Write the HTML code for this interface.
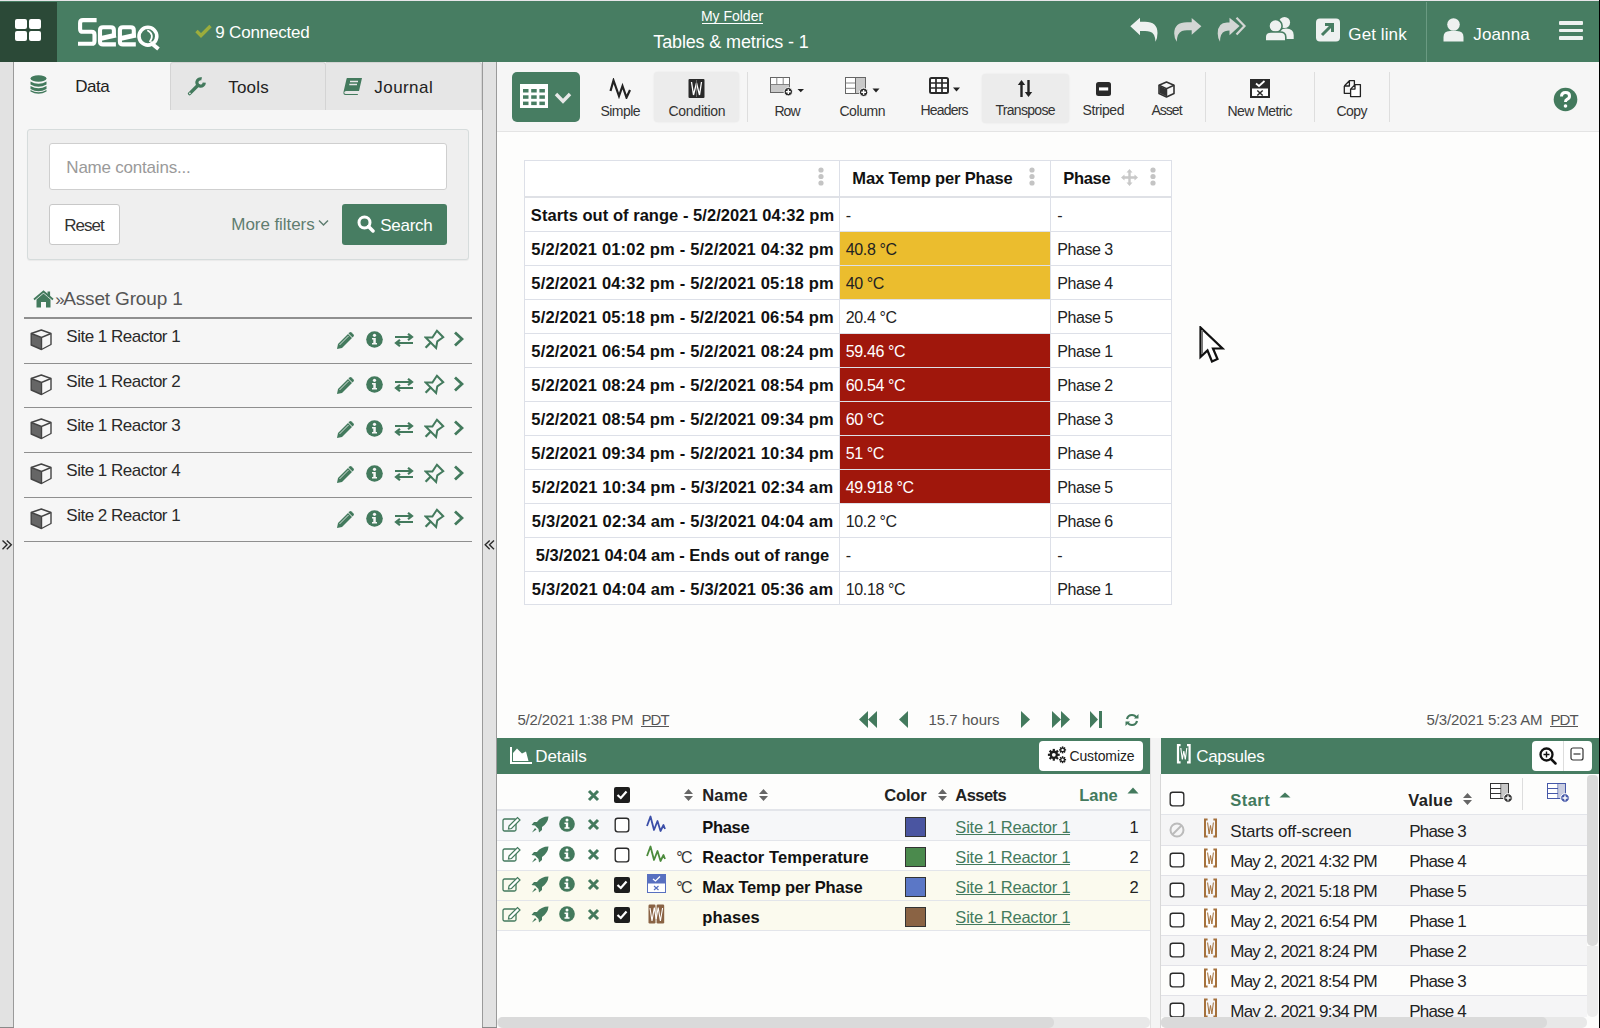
<!DOCTYPE html>
<html><head><meta charset="utf-8"><title>Seeq</title>
<style>
html,body{margin:0;padding:0;width:1600px;height:1028px;overflow:hidden;background:#fdfdfc;}
body{position:relative;font-family:"Liberation Sans",sans-serif;}
body>div,body>span,body>svg{position:absolute;}
span{white-space:pre;line-height:1;}
</style></head><body>
<div style="left:0px;top:0px;width:1600px;height:1px;background:#e8e6ea"></div>
<div style="left:0px;top:1px;width:1600px;height:61px;background:#477d62"></div>
<div style="left:0px;top:2px;width:57px;height:60px;background:#2b4937"></div>
<div style="left:15px;top:19px;width:12px;height:10px;background:#fff;border-radius:2px"></div>
<div style="left:29px;top:19px;width:12px;height:10px;background:#fff;border-radius:2px"></div>
<div style="left:15px;top:31px;width:12px;height:10px;background:#fff;border-radius:2px"></div>
<div style="left:29px;top:31px;width:12px;height:10px;background:#fff;border-radius:2px"></div>
<svg style="left:76px;top:16px" width="88" height="36" viewBox="0 0 88 36">
<g fill="none" stroke="#fff" stroke-width="4.1">
<path d="M20.6 4.1 H7 Q4.1 4.1 4.1 7 V12.9 Q4.1 15.8 7 15.8 H15.6 Q18.5 15.8 18.5 18.7 V24.9 Q18.5 27.8 15.6 27.8 H2"/>
<path d="M37.9 20 V14.3 Q37.9 11.3 34.9 11.3 H27 Q24 11.3 24 14.3 V25.4 Q24 28.4 27 28.4 H39.9"/>
<path d="M24 22.6 L39.9 19.1" stroke-width="4.7"/>
<path d="M57.8 20 V14.3 Q57.8 11.3 54.8 11.3 H46.9 Q43.9 11.3 43.9 14.3 V25.4 Q43.9 28.4 46.9 28.4 H59.8"/>
<path d="M43.9 22.6 L59.8 19.1" stroke-width="4.7"/>
<circle cx="71.9" cy="20.2" r="8.9" stroke-width="3.6"/>
<path d="M74.5 26.5 L82.5 33" stroke-width="4"/>
</g>
<path d="M71.3 14.3 Q79.2 18.5 73.6 26" fill="none" stroke="#fff" stroke-width="1.7"/>
</svg>
<svg style="left:195px;top:24px" width="17" height="14" viewBox="0 0 17 14"><path d="M1.5 7 L6 11.5 L15.5 2" fill="none" stroke="#9cad3c" stroke-width="3.4"/></svg>
<span style="left:215.32px;top:23.55px;font-size:17px;font-weight:400;color:#fff;letter-spacing:-0.205px;">9 Connected</span>
<span style="left:700.94px;top:9.10px;font-size:14px;font-weight:400;color:#fff;letter-spacing:-0.014px;">My Folder</span>
<div style="left:702px;top:22.5px;width:61px;height:1px;background:#fff"></div>
<span style="left:653.28px;top:32.70px;font-size:18px;font-weight:400;color:#fff;letter-spacing:-0.137px;">Tables &amp; metrics - 1</span>
<svg style="left:1129px;top:16px" width="30" height="28" viewBox="0 0 30 28"><path d="M1.3 10.2 L11 1.7 V5.8 H16 Q28.5 5.8 28.5 17 Q28.5 22 26.5 25.7 Q26 17 21 15.8 Q19 15.1 16 15.1 H11 V19.2 Z" fill="#eef1f0"/></svg>
<svg style="left:1172px;top:16px" width="31" height="28" viewBox="0 0 31 28"><path d="M29.4 10.2 L19.7 2.1 V6.2 H15 Q2.2 6.2 2.2 17.5 Q2.2 22 4.8 25.7 Q5 17 10 15 Q12 14.3 15 14.3 H19.7 V18.8 Z" fill="#d3d6d4"/></svg>
<svg style="left:1216px;top:16px" width="31" height="28" viewBox="0 0 31 28"><path d="M23.6 10 L13.5 1.7 V6.5 H11 Q1.7 6.5 1.7 17.5 Q1.7 22 4 25.7 Q4 17 9 15.2 Q11 14.5 13.5 14.5 V19.2 Z" fill="#d3d6d4"/><path d="M20.5 1.7 L28.5 10 L20.5 18.5" fill="none" stroke="#d3d6d4" stroke-width="2.2"/></svg>
<svg style="left:1264px;top:15px" width="31" height="27" viewBox="0 0 31 27"><g fill="#eef1f0"><circle cx="20.5" cy="7.5" r="5.6"/><path d="M15 24 V19.5 Q15 13.5 22 13.5 Q29.7 13.5 29.7 20 V24 Z"/>
<circle cx="11.5" cy="11" r="6.6" stroke="#477d62" stroke-width="1.6"/><path d="M1.2 26 V22 Q1.2 17 7 17 H16 Q21.8 17 21.8 22 V26 Z" stroke="#477d62" stroke-width="1.6"/></g></svg>
<svg style="left:1315px;top:18px" width="26" height="24" viewBox="0 0 26 24"><rect x="1" y="0.5" width="24" height="23" rx="4" fill="#eef1f0"/><path d="M7 17 L17 7 M10 6.5 H17.5 V14" stroke="#477d62" stroke-width="3" fill="none"/></svg>
<span style="left:1348.32px;top:25.55px;font-size:17px;font-weight:400;color:#fff;letter-spacing:0.103px;">Get link</span>
<div style="left:1426px;top:2px;width:1px;height:60px;background:#6a9a82"></div>
<svg style="left:1443px;top:18px" width="21" height="24" viewBox="0 0 21 24"><circle cx="10.5" cy="6.5" r="6.3" fill="#eef1f0"/><path d="M0.5 23.5 V19 Q0.5 13 7 13 H14 Q20.5 13 20.5 19 V23.5 Z" fill="#eef1f0"/></svg>
<span style="left:1473.32px;top:25.55px;font-size:17px;font-weight:400;color:#fff;letter-spacing:0.116px;">Joanna</span>
<div style="left:1559px;top:21px;width:24px;height:3.8px;background:#eef1f0;border-radius:1px"></div>
<div style="left:1559px;top:28.5px;width:24px;height:3.8px;background:#eef1f0;border-radius:1px"></div>
<div style="left:1559px;top:36px;width:24px;height:3.8px;background:#eef1f0;border-radius:1px"></div>
<div style="left:0px;top:62px;width:13px;height:966px;background:#e2e2e2"></div>
<div style="left:13px;top:62px;width:1px;height:966px;background:#9a9a9a"></div>
<div style="left:14px;top:62px;width:468px;height:966px;background:#f6f6f6"></div>
<div style="left:482px;top:62px;width:1px;height:966px;background:#9a9a9a"></div>
<div style="left:483px;top:62px;width:13px;height:966px;background:#e2e2e2"></div>
<div style="left:496px;top:62px;width:1px;height:966px;background:#9a9a9a"></div>
<svg style="left:1px;top:539px" width="12" height="12" viewBox="0 0 12 12"><path d="M1.5 1.5 L6 5.8 L1.5 10.2 M5.8 1.5 L10.3 5.8 L5.8 10.2" fill="none" stroke="#2a2a2a" stroke-width="1.4"/></svg>
<svg style="left:483px;top:539px" width="13" height="12" viewBox="0 0 13 12"><path d="M11 1.5 L6.5 5.8 L11 10.2 M6.7 1.5 L2.2 5.8 L6.7 10.2" fill="none" stroke="#2a2a2a" stroke-width="1.4"/></svg>
<div style="left:170px;top:62px;width:156px;height:48px;background:#e6e6e6;border:1px solid #d4d4d4;border-bottom:none;border-radius:3px 3px 0 0;box-sizing:border-box"></div>
<div style="left:326px;top:62px;width:156px;height:48px;background:#e6e6e6;border:1px solid #d4d4d4;border-left:none;border-bottom:none;border-radius:0 3px 0 0;box-sizing:border-box"></div>
<svg style="left:30px;top:74.5px" width="17" height="20" viewBox="0 0 17 20"><g fill="#437a5d"><ellipse cx="8.5" cy="3.5" rx="8" ry="3.2"/><path d="M0.5 6.5 Q8.5 11 16.5 6.5 V9.5 Q8.5 14 0.5 9.5Z"/><path d="M0.5 11 Q8.5 15.5 16.5 11 V14 Q8.5 18.5 0.5 14Z"/><path d="M0.5 15 Q8.5 19.5 16.5 15 V16.5 Q8.5 21 0.5 16.5Z"/></g></svg>
<span style="left:75.32px;top:77.55px;font-size:17px;font-weight:400;color:#222;letter-spacing:-0.521px;">Data</span>
<svg style="left:187px;top:77px" width="20" height="19" viewBox="0 0 20 19"><path d="M17.3 5.6 A3.7 3.7 0 1 1 14.6 1.9" fill="none" stroke="#437a5d" stroke-width="3.2"/><path d="M11 8.3 L2.6 16.6" stroke="#437a5d" stroke-width="3.4" stroke-linecap="round"/><circle cx="2.9" cy="16.3" r="0.9" fill="#e6e6e6"/></svg>
<span style="left:228.32px;top:78.55px;font-size:17px;font-weight:400;color:#222;letter-spacing:0.168px;">Tools</span>
<svg style="left:343px;top:77px" width="20" height="18" viewBox="0 0 20 18"><path d="M4 1 H19 L16 14 H3 Q1.5 14 1.2 15.5 Q1.5 17 3 17 H15 L14.7 18 H2.5 Q0 18 0.5 15 L3.5 2 Q3.8 1 4 1Z" fill="#437a5d"/><path d="M7 4.5 H15 M6.3 7.5 H14" stroke="#e6e6e6" stroke-width="1.3"/></svg>
<span style="left:374.32px;top:78.55px;font-size:17px;font-weight:400;color:#222;letter-spacing:0.432px;">Journal</span>
<div style="left:27px;top:129px;width:442px;height:131px;background:#efefef;border:1px solid #d6dcdc;border-radius:3px;box-sizing:border-box;box-shadow:0 1px 1px rgba(0,0,0,0.05)"></div>
<div style="left:49px;top:143px;width:398px;height:47px;background:#fff;border:1px solid #cfcfcf;border-radius:3px;box-sizing:border-box"></div>
<span style="left:66.32px;top:158.55px;font-size:17px;font-weight:400;color:#9a9a9a;letter-spacing:-0.214px;">Name contains...</span>
<div style="left:49px;top:204px;width:71px;height:41px;background:#fff;border:1px solid #c8c8c8;border-radius:3px;box-sizing:border-box"></div>
<span style="left:64.32px;top:216.55px;font-size:17px;font-weight:400;color:#333;letter-spacing:-1.015px;">Reset</span>
<span style="left:231.32px;top:215.55px;font-size:17px;font-weight:400;color:#5f7d70;letter-spacing:-0.065px;">More filters</span>
<svg style="left:318px;top:219px" width="11" height="8" viewBox="0 0 11 8"><path d="M1 1.5 L5.5 6 L10 1.5" fill="none" stroke="#5f7d70" stroke-width="1.5"/></svg>
<div style="left:342px;top:204px;width:105px;height:41px;background:#477d62;border-radius:3px"></div>
<svg style="left:357px;top:215px" width="18" height="18" viewBox="0 0 18 18"><circle cx="7.5" cy="7.5" r="5.5" fill="none" stroke="#fff" stroke-width="3"/><path d="M11.5 11.5 L16 16" stroke="#fff" stroke-width="3.5" stroke-linecap="round"/></svg>
<span style="left:380.32px;top:216.55px;font-size:17px;font-weight:400;color:#fff;letter-spacing:-0.303px;">Search</span>
<svg style="left:33px;top:290px" width="21" height="18" viewBox="0 0 21 18"><path d="M1 9.5 L10.5 1.5 L20 9.5" fill="none" stroke="#437a5d" stroke-width="1.8"/><path d="M10.5 3.5 L17.5 9.5 V17.5 H13 V12 H8 V17.5 H3.5 V9.5 Z" fill="#437a5d"/><rect x="14.5" y="1.5" width="2.6" height="5" fill="#437a5d"/></svg>
<span style="left:55.32px;top:290.55px;font-size:17px;font-weight:400;color:#555;letter-spacing:0.000px;">»</span>
<span style="left:63.24px;top:288.85px;font-size:19px;font-weight:400;color:#555;letter-spacing:-0.161px;">Asset Group 1</span>
<div style="left:24px;top:317px;width:448px;height:2px;background:#8f8f8f"></div>
<svg style="left:30px;top:329px" width="22" height="22" viewBox="0 0 22 22"><path d="M1.2 4.5 L11.5 8.5 V20.3 L1.2 16 Z" fill="#666"/><path d="M11.3 1 L21 4.5 V15.5 L11.5 20.5 L1.2 16 V4.5 Z" fill="none" stroke="#444" stroke-width="1.4" stroke-linejoin="round"/><path d="M1.2 4.5 L11.5 8.5 L21 4.5 M11.5 8.5 V20.5" fill="none" stroke="#444" stroke-width="1.4"/></svg>
<span style="left:66.32px;top:327.55px;font-size:17px;font-weight:400;color:#2a2a2a;letter-spacing:-0.503px;">Site 1 Reactor 1</span>
<svg style="left:335px;top:331px" width="20" height="20" viewBox="0 0 20 20"><path d="M3 13 L13 3 L17 7 L7 17 L2 18 Z" fill="#437a5d"/><path d="M14.5 1.5 Q15.5 0.5 16.5 1.5 L18.5 3.5 Q19.5 4.5 18.5 5.5 L17.5 6.5 L13.5 2.5Z" fill="#437a5d"/><path d="M4.5 14 L13.5 5" stroke="#f6f6f6" stroke-width="0.8"/></svg>
<svg style="left:366px;top:331px" width="17" height="17" viewBox="0 0 17 17"><circle cx="8.5" cy="8.5" r="8.3" fill="#437a5d"/><circle cx="8.5" cy="4.3" r="1.6" fill="#f6f6f6"/><path d="M6 7 H9.8 V12 H11 V13.5 H6 V12 H7.3 V8.5 H6Z" fill="#f6f6f6"/></svg>
<svg style="left:394px;top:333px" width="20" height="14" viewBox="0 0 20 14"><g stroke="#437a5d" stroke-width="2.2" fill="none"><path d="M1 4 H17 M14 0.8 L18 4 L14 7.2"/><path d="M19 10 H3 M6 6.8 L2 10 L6 13.2"/></g></svg>
<svg style="left:424px;top:329px" width="21" height="21" viewBox="0 0 21 21"><path d="M12.9 1.8 L19.2 8.2 L13.3 12.4 L12.1 19 L1.6 8.5 L8.4 8.5 Z" fill="none" stroke="#437a5d" stroke-width="2" stroke-linejoin="miter"/><path d="M7.2 13 L1.6 18.8" stroke="#437a5d" stroke-width="2.3"/></svg>
<svg style="left:453px;top:331px" width="11" height="16" viewBox="0 0 11 16"><path d="M2 1.5 L9 8 L2 14.5" fill="none" stroke="#437a5d" stroke-width="2.8"/></svg>
<div style="left:24px;top:363px;width:448px;height:1px;background:#8f8f8f"></div>
<svg style="left:30px;top:374px" width="22" height="22" viewBox="0 0 22 22"><path d="M1.2 4.5 L11.5 8.5 V20.3 L1.2 16 Z" fill="#666"/><path d="M11.3 1 L21 4.5 V15.5 L11.5 20.5 L1.2 16 V4.5 Z" fill="none" stroke="#444" stroke-width="1.4" stroke-linejoin="round"/><path d="M1.2 4.5 L11.5 8.5 L21 4.5 M11.5 8.5 V20.5" fill="none" stroke="#444" stroke-width="1.4"/></svg>
<span style="left:66.32px;top:372.55px;font-size:17px;font-weight:400;color:#2a2a2a;letter-spacing:-0.503px;">Site 1 Reactor 2</span>
<svg style="left:335px;top:376px" width="20" height="20" viewBox="0 0 20 20"><path d="M3 13 L13 3 L17 7 L7 17 L2 18 Z" fill="#437a5d"/><path d="M14.5 1.5 Q15.5 0.5 16.5 1.5 L18.5 3.5 Q19.5 4.5 18.5 5.5 L17.5 6.5 L13.5 2.5Z" fill="#437a5d"/><path d="M4.5 14 L13.5 5" stroke="#f6f6f6" stroke-width="0.8"/></svg>
<svg style="left:366px;top:376px" width="17" height="17" viewBox="0 0 17 17"><circle cx="8.5" cy="8.5" r="8.3" fill="#437a5d"/><circle cx="8.5" cy="4.3" r="1.6" fill="#f6f6f6"/><path d="M6 7 H9.8 V12 H11 V13.5 H6 V12 H7.3 V8.5 H6Z" fill="#f6f6f6"/></svg>
<svg style="left:394px;top:378px" width="20" height="14" viewBox="0 0 20 14"><g stroke="#437a5d" stroke-width="2.2" fill="none"><path d="M1 4 H17 M14 0.8 L18 4 L14 7.2"/><path d="M19 10 H3 M6 6.8 L2 10 L6 13.2"/></g></svg>
<svg style="left:424px;top:374px" width="21" height="21" viewBox="0 0 21 21"><path d="M12.9 1.8 L19.2 8.2 L13.3 12.4 L12.1 19 L1.6 8.5 L8.4 8.5 Z" fill="none" stroke="#437a5d" stroke-width="2" stroke-linejoin="miter"/><path d="M7.2 13 L1.6 18.8" stroke="#437a5d" stroke-width="2.3"/></svg>
<svg style="left:453px;top:376px" width="11" height="16" viewBox="0 0 11 16"><path d="M2 1.5 L9 8 L2 14.5" fill="none" stroke="#437a5d" stroke-width="2.8"/></svg>
<div style="left:24px;top:407px;width:448px;height:1px;background:#8f8f8f"></div>
<svg style="left:30px;top:418px" width="22" height="22" viewBox="0 0 22 22"><path d="M1.2 4.5 L11.5 8.5 V20.3 L1.2 16 Z" fill="#666"/><path d="M11.3 1 L21 4.5 V15.5 L11.5 20.5 L1.2 16 V4.5 Z" fill="none" stroke="#444" stroke-width="1.4" stroke-linejoin="round"/><path d="M1.2 4.5 L11.5 8.5 L21 4.5 M11.5 8.5 V20.5" fill="none" stroke="#444" stroke-width="1.4"/></svg>
<span style="left:66.32px;top:416.55px;font-size:17px;font-weight:400;color:#2a2a2a;letter-spacing:-0.503px;">Site 1 Reactor 3</span>
<svg style="left:335px;top:420px" width="20" height="20" viewBox="0 0 20 20"><path d="M3 13 L13 3 L17 7 L7 17 L2 18 Z" fill="#437a5d"/><path d="M14.5 1.5 Q15.5 0.5 16.5 1.5 L18.5 3.5 Q19.5 4.5 18.5 5.5 L17.5 6.5 L13.5 2.5Z" fill="#437a5d"/><path d="M4.5 14 L13.5 5" stroke="#f6f6f6" stroke-width="0.8"/></svg>
<svg style="left:366px;top:420px" width="17" height="17" viewBox="0 0 17 17"><circle cx="8.5" cy="8.5" r="8.3" fill="#437a5d"/><circle cx="8.5" cy="4.3" r="1.6" fill="#f6f6f6"/><path d="M6 7 H9.8 V12 H11 V13.5 H6 V12 H7.3 V8.5 H6Z" fill="#f6f6f6"/></svg>
<svg style="left:394px;top:422px" width="20" height="14" viewBox="0 0 20 14"><g stroke="#437a5d" stroke-width="2.2" fill="none"><path d="M1 4 H17 M14 0.8 L18 4 L14 7.2"/><path d="M19 10 H3 M6 6.8 L2 10 L6 13.2"/></g></svg>
<svg style="left:424px;top:418px" width="21" height="21" viewBox="0 0 21 21"><path d="M12.9 1.8 L19.2 8.2 L13.3 12.4 L12.1 19 L1.6 8.5 L8.4 8.5 Z" fill="none" stroke="#437a5d" stroke-width="2" stroke-linejoin="miter"/><path d="M7.2 13 L1.6 18.8" stroke="#437a5d" stroke-width="2.3"/></svg>
<svg style="left:453px;top:420px" width="11" height="16" viewBox="0 0 11 16"><path d="M2 1.5 L9 8 L2 14.5" fill="none" stroke="#437a5d" stroke-width="2.8"/></svg>
<div style="left:24px;top:452px;width:448px;height:1px;background:#8f8f8f"></div>
<svg style="left:30px;top:463px" width="22" height="22" viewBox="0 0 22 22"><path d="M1.2 4.5 L11.5 8.5 V20.3 L1.2 16 Z" fill="#666"/><path d="M11.3 1 L21 4.5 V15.5 L11.5 20.5 L1.2 16 V4.5 Z" fill="none" stroke="#444" stroke-width="1.4" stroke-linejoin="round"/><path d="M1.2 4.5 L11.5 8.5 L21 4.5 M11.5 8.5 V20.5" fill="none" stroke="#444" stroke-width="1.4"/></svg>
<span style="left:66.32px;top:461.55px;font-size:17px;font-weight:400;color:#2a2a2a;letter-spacing:-0.503px;">Site 1 Reactor 4</span>
<svg style="left:335px;top:465px" width="20" height="20" viewBox="0 0 20 20"><path d="M3 13 L13 3 L17 7 L7 17 L2 18 Z" fill="#437a5d"/><path d="M14.5 1.5 Q15.5 0.5 16.5 1.5 L18.5 3.5 Q19.5 4.5 18.5 5.5 L17.5 6.5 L13.5 2.5Z" fill="#437a5d"/><path d="M4.5 14 L13.5 5" stroke="#f6f6f6" stroke-width="0.8"/></svg>
<svg style="left:366px;top:465px" width="17" height="17" viewBox="0 0 17 17"><circle cx="8.5" cy="8.5" r="8.3" fill="#437a5d"/><circle cx="8.5" cy="4.3" r="1.6" fill="#f6f6f6"/><path d="M6 7 H9.8 V12 H11 V13.5 H6 V12 H7.3 V8.5 H6Z" fill="#f6f6f6"/></svg>
<svg style="left:394px;top:467px" width="20" height="14" viewBox="0 0 20 14"><g stroke="#437a5d" stroke-width="2.2" fill="none"><path d="M1 4 H17 M14 0.8 L18 4 L14 7.2"/><path d="M19 10 H3 M6 6.8 L2 10 L6 13.2"/></g></svg>
<svg style="left:424px;top:463px" width="21" height="21" viewBox="0 0 21 21"><path d="M12.9 1.8 L19.2 8.2 L13.3 12.4 L12.1 19 L1.6 8.5 L8.4 8.5 Z" fill="none" stroke="#437a5d" stroke-width="2" stroke-linejoin="miter"/><path d="M7.2 13 L1.6 18.8" stroke="#437a5d" stroke-width="2.3"/></svg>
<svg style="left:453px;top:465px" width="11" height="16" viewBox="0 0 11 16"><path d="M2 1.5 L9 8 L2 14.5" fill="none" stroke="#437a5d" stroke-width="2.8"/></svg>
<div style="left:24px;top:497px;width:448px;height:1px;background:#8f8f8f"></div>
<svg style="left:30px;top:508px" width="22" height="22" viewBox="0 0 22 22"><path d="M1.2 4.5 L11.5 8.5 V20.3 L1.2 16 Z" fill="#666"/><path d="M11.3 1 L21 4.5 V15.5 L11.5 20.5 L1.2 16 V4.5 Z" fill="none" stroke="#444" stroke-width="1.4" stroke-linejoin="round"/><path d="M1.2 4.5 L11.5 8.5 L21 4.5 M11.5 8.5 V20.5" fill="none" stroke="#444" stroke-width="1.4"/></svg>
<span style="left:66.32px;top:506.55px;font-size:17px;font-weight:400;color:#2a2a2a;letter-spacing:-0.503px;">Site 2 Reactor 1</span>
<svg style="left:335px;top:510px" width="20" height="20" viewBox="0 0 20 20"><path d="M3 13 L13 3 L17 7 L7 17 L2 18 Z" fill="#437a5d"/><path d="M14.5 1.5 Q15.5 0.5 16.5 1.5 L18.5 3.5 Q19.5 4.5 18.5 5.5 L17.5 6.5 L13.5 2.5Z" fill="#437a5d"/><path d="M4.5 14 L13.5 5" stroke="#f6f6f6" stroke-width="0.8"/></svg>
<svg style="left:366px;top:510px" width="17" height="17" viewBox="0 0 17 17"><circle cx="8.5" cy="8.5" r="8.3" fill="#437a5d"/><circle cx="8.5" cy="4.3" r="1.6" fill="#f6f6f6"/><path d="M6 7 H9.8 V12 H11 V13.5 H6 V12 H7.3 V8.5 H6Z" fill="#f6f6f6"/></svg>
<svg style="left:394px;top:512px" width="20" height="14" viewBox="0 0 20 14"><g stroke="#437a5d" stroke-width="2.2" fill="none"><path d="M1 4 H17 M14 0.8 L18 4 L14 7.2"/><path d="M19 10 H3 M6 6.8 L2 10 L6 13.2"/></g></svg>
<svg style="left:424px;top:508px" width="21" height="21" viewBox="0 0 21 21"><path d="M12.9 1.8 L19.2 8.2 L13.3 12.4 L12.1 19 L1.6 8.5 L8.4 8.5 Z" fill="none" stroke="#437a5d" stroke-width="2" stroke-linejoin="miter"/><path d="M7.2 13 L1.6 18.8" stroke="#437a5d" stroke-width="2.3"/></svg>
<svg style="left:453px;top:510px" width="11" height="16" viewBox="0 0 11 16"><path d="M2 1.5 L9 8 L2 14.5" fill="none" stroke="#437a5d" stroke-width="2.8"/></svg>
<div style="left:24px;top:541px;width:448px;height:1px;background:#8f8f8f"></div>
<div style="left:497px;top:62px;width:1103px;height:69px;background:#f6f6f6"></div>
<div style="left:497px;top:131px;width:1103px;height:1px;background:#e4e4e4"></div>
<div style="left:512px;top:72px;width:68px;height:50px;background:#477d62;border-radius:5px"></div>
<svg style="left:520px;top:84px" width="28" height="24" viewBox="0 0 28 24"><rect x="0" y="0" width="28" height="24" fill="#fff"/><g fill="#477d62"><rect x="3.0" y="5.0" width="5.5" height="3.5"/><rect x="11.2" y="5.0" width="5.5" height="3.5"/><rect x="19.4" y="5.0" width="5.5" height="3.5"/><rect x="3.0" y="11.3" width="5.5" height="3.5"/><rect x="11.2" y="11.3" width="5.5" height="3.5"/><rect x="19.4" y="11.3" width="5.5" height="3.5"/><rect x="3.0" y="17.6" width="5.5" height="3.5"/><rect x="11.2" y="17.6" width="5.5" height="3.5"/><rect x="19.4" y="17.6" width="5.5" height="3.5"/></g></svg>
<svg style="left:554px;top:92px" width="18" height="12" viewBox="0 0 18 12"><path d="M2 2 L9 9.3 L16 2" fill="none" stroke="#e8e8e8" stroke-width="3.4"/></svg>
<div style="left:654px;top:72px;width:85px;height:50px;background:#ececec;border-radius:4px;box-shadow:0 0 2px rgba(0,0,0,0.08)"></div>
<div style="left:982px;top:74px;width:87px;height:49px;background:#ececec;border-radius:4px;box-shadow:0 0 2px rgba(0,0,0,0.08)"></div>
<div style="left:747px;top:72px;width:1px;height:50px;background:#dedede"></div>
<div style="left:1205px;top:72px;width:1px;height:50px;background:#dedede"></div>
<div style="left:1314px;top:72px;width:1px;height:50px;background:#dedede"></div>
<div style="left:1389px;top:72px;width:1px;height:50px;background:#dedede"></div>
<svg style="left:609px;top:78px" width="23" height="21" viewBox="0 0 23 21"><path d="M1.5 13 L4.5 2.5 L10 18 L13.5 8 L17.5 19.5 L21 12" fill="none" stroke="#222" stroke-width="2.2" stroke-linejoin="miter"/></svg>
<span style="left:600.44px;top:104.10px;font-size:14px;font-weight:400;color:#333;letter-spacing:-0.535px;">Simple</span>
<svg style="left:688px;top:79px" width="17" height="19" viewBox="0 0 17 19"><rect x="0.5" y="0" width="16" height="19" rx="1" fill="#2a2a2a"/><path d="M3.5 3 L5.5 16 L8.5 4 L11.5 16 L13.5 3" fill="none" stroke="#fff" stroke-width="1.3"/><path d="M8.5 1 V18" stroke="#777" stroke-width="0.8"/></svg>
<span style="left:668.44px;top:104.10px;font-size:14px;font-weight:400;color:#333;letter-spacing:-0.255px;">Condition</span>
<svg style="left:770px;top:77px" width="35" height="20" viewBox="0 0 35 20"><rect x="0.5" y="0.5" width="19" height="15" fill="#fff" stroke="#666"/><path d="M0.5 7.5 H19.5 M6.8 0.5 V7.5 M13.2 0.5 V7.5" stroke="#777" stroke-width="0.9"/><rect x="1" y="8" width="18" height="7" fill="#c9c9c9"/><circle cx="18.3" cy="14.7" r="4.2" fill="#2a2a2a" stroke="#f6f6f6" stroke-width="1"/><path d="M18.3 12.3 V17.1 M15.9 14.7 H20.7" stroke="#fff" stroke-width="1.4"/><path d="M27.5 12 L34 12 L30.75 15.3Z" fill="#222"/></svg>
<span style="left:774.44px;top:104.10px;font-size:14px;font-weight:400;color:#333;letter-spacing:-0.948px;">Row</span>
<svg style="left:845px;top:77px" width="36" height="20" viewBox="0 0 36 20"><rect x="0.5" y="0.5" width="20" height="16" fill="#fff" stroke="#666"/><path d="M0.5 6 H10.5 M0.5 11.3 H10.5" stroke="#777" stroke-width="0.9"/><rect x="10.5" y="1" width="9.5" height="15" fill="#c9c9c9"/><path d="M10.5 0.5 V16.5" stroke="#666"/><circle cx="18.6" cy="15.3" r="4.2" fill="#2a2a2a" stroke="#f6f6f6" stroke-width="1"/><path d="M18.6 12.9 V17.7 M16.2 15.3 H21" stroke="#fff" stroke-width="1.4"/><path d="M27.5 11.5 L34.5 11.5 L31 15.5Z" fill="#222"/></svg>
<span style="left:839.44px;top:104.10px;font-size:14px;font-weight:400;color:#333;letter-spacing:-0.426px;">Column</span>
<svg style="left:929px;top:77px" width="32" height="17" viewBox="0 0 32 17"><rect x="1" y="1" width="18" height="15" rx="1.5" fill="#fff" stroke="#2a2a2a" stroke-width="2"/><path d="M1 6 H19 M1 11 H19 M7 1 V16 M13 1 V16" stroke="#2a2a2a" stroke-width="1.7"/><path d="M24 10.5 L31 10.5 L27.5 14.5Z" fill="#222"/></svg>
<span style="left:920.44px;top:103.10px;font-size:14px;font-weight:400;color:#333;letter-spacing:-0.800px;">Headers</span>
<svg style="left:1017px;top:79px" width="16" height="19" viewBox="0 0 16 19"><path d="M4.5 18 V3" stroke="#222" stroke-width="2.4"/><path d="M0.8 6 L4.5 1 L8.2 6Z" fill="#222"/><path d="M11.5 1 V15" stroke="#222" stroke-width="2.4"/><path d="M7.8 13 L11.5 18 L15.2 13Z" fill="#222"/></svg>
<span style="left:995.44px;top:103.10px;font-size:14px;font-weight:400;color:#333;letter-spacing:-0.688px;">Transpose</span>
<svg style="left:1096px;top:82px" width="15" height="14" viewBox="0 0 15 14"><rect x="0" y="0" width="15" height="14" rx="2.5" fill="#2a2a2a"/><rect x="3" y="5.4" width="9.2" height="3.1" fill="#fff"/></svg>
<span style="left:1082.44px;top:103.10px;font-size:14px;font-weight:400;color:#333;letter-spacing:-0.373px;">Striped</span>
<svg style="left:1158px;top:81px" width="17" height="17" viewBox="0 0 17 17"><path d="M8.5 1 L16 4.3 V12.5 L8.5 16 L1 12.5 V4.3 Z" fill="none" stroke="#333" stroke-width="1.6" stroke-linejoin="round"/><path d="M1 4.3 L8.5 7.7 L16 4.3 M8.5 7.7 V16" fill="none" stroke="#333" stroke-width="1.5"/><path d="M1.5 5 L8 8 V15 L1.5 12 Z" fill="#333"/></svg>
<span style="left:1151.44px;top:103.10px;font-size:14px;font-weight:400;color:#333;letter-spacing:-0.974px;">Asset</span>
<svg style="left:1250px;top:79px" width="20" height="19" viewBox="0 0 20 19"><rect x="1" y="1" width="18" height="17" fill="#fff" stroke="#2a2a2a" stroke-width="2"/><rect x="1" y="1" width="18" height="8.5" fill="#2a2a2a"/><path d="M6 4.5 L9 7 L14.5 2" stroke="#fff" stroke-width="1.7" fill="none"/><path d="M7.3 11.5 L12.7 16.5 M12.7 11.5 L7.3 16.5" stroke="#2a2a2a" stroke-width="1.5"/></svg>
<span style="left:1227.44px;top:104.10px;font-size:14px;font-weight:400;color:#333;letter-spacing:-0.544px;">New Metric</span>
<svg style="left:1343px;top:79px" width="19" height="19" viewBox="0 0 19 19"><g fill="none" stroke="#222" stroke-width="1.3" stroke-linejoin="round"><path d="M1.3 7 V14.3 H7.1 M1.3 7 L6.4 1.7 H11.4 V6.1 M1.3 7 H6.4 V1.7"/><path d="M7.6 10.1 L12 5.6 H17.4 V17.6 H7.6 Z M7.6 10.1 H12 V5.6" fill="#fff"/></g></svg>
<span style="left:1336.44px;top:104.10px;font-size:14px;font-weight:400;color:#333;letter-spacing:-0.522px;">Copy</span>
<svg style="left:1553px;top:87px" width="25" height="25" viewBox="0 0 25 25"><circle cx="12.5" cy="12.5" r="11.8" fill="#437a5d"/><path d="M8.5 9.5 Q8.5 5.5 12.5 5.5 Q16.5 5.5 16.5 9 Q16.5 11.5 13.8 12.5 Q12.5 13 12.5 15" fill="none" stroke="#fff" stroke-width="3"/><circle cx="12.5" cy="19" r="1.8" fill="#fff"/></svg>
<div style="left:524px;top:160px;width:648px;height:445px;background:#fff;border:1px solid #dde0e8;box-sizing:border-box"></div>
<div style="left:524px;top:196px;width:647px;height:2px;background:#dfe1e6"></div>
<span style="left:530.84px;top:206.97px;font-size:16.5px;font-weight:700;color:#111;letter-spacing:0.043px;">Starts out of range - 5/2/2021 04:32 pm</span>
<span style="left:845.86px;top:208.40px;font-size:16px;font-weight:400;color:#222;letter-spacing:0.000px;">-</span>
<span style="left:1057.36px;top:208.40px;font-size:16px;font-weight:400;color:#222;letter-spacing:0.000px;">-</span>
<div style="left:840px;top:231px;width:210px;height:34px;background:#ebbd2e"></div>
<div style="left:524px;top:231px;width:647px;height:1px;background:#dde0e8"></div>
<span style="left:531.34px;top:240.97px;font-size:16.5px;font-weight:700;color:#111;letter-spacing:0.193px;">5/2/2021 01:02 pm - 5/2/2021 04:32 pm</span>
<span style="left:845.86px;top:242.40px;font-size:16px;font-weight:400;color:#222;letter-spacing:-0.392px;">40.8 °C</span>
<span style="left:1057.36px;top:242.40px;font-size:16px;font-weight:400;color:#222;letter-spacing:-0.479px;">Phase 3</span>
<div style="left:840px;top:265px;width:210px;height:34px;background:#ebbd2e"></div>
<div style="left:524px;top:265px;width:647px;height:1px;background:#dde0e8"></div>
<span style="left:531.34px;top:274.98px;font-size:16.5px;font-weight:700;color:#111;letter-spacing:0.193px;">5/2/2021 04:32 pm - 5/2/2021 05:18 pm</span>
<span style="left:845.86px;top:276.40px;font-size:16px;font-weight:400;color:#222;letter-spacing:-0.438px;">40 °C</span>
<span style="left:1057.36px;top:276.40px;font-size:16px;font-weight:400;color:#222;letter-spacing:-0.479px;">Phase 4</span>
<div style="left:524px;top:299px;width:647px;height:1px;background:#dde0e8"></div>
<span style="left:531.34px;top:308.98px;font-size:16.5px;font-weight:700;color:#111;letter-spacing:0.193px;">5/2/2021 05:18 pm - 5/2/2021 06:54 pm</span>
<span style="left:845.86px;top:310.40px;font-size:16px;font-weight:400;color:#222;letter-spacing:-0.392px;">20.4 °C</span>
<span style="left:1057.36px;top:310.40px;font-size:16px;font-weight:400;color:#222;letter-spacing:-0.479px;">Phase 5</span>
<div style="left:840px;top:333px;width:210px;height:34px;background:#a0170c"></div>
<div style="left:524px;top:333px;width:647px;height:1px;background:#dde0e8"></div>
<span style="left:531.34px;top:342.98px;font-size:16.5px;font-weight:700;color:#111;letter-spacing:0.193px;">5/2/2021 06:54 pm - 5/2/2021 08:24 pm</span>
<span style="left:845.86px;top:344.40px;font-size:16px;font-weight:400;color:#fff;letter-spacing:-0.393px;">59.46 °C</span>
<span style="left:1057.36px;top:344.40px;font-size:16px;font-weight:400;color:#222;letter-spacing:-0.479px;">Phase 1</span>
<div style="left:840px;top:367px;width:210px;height:34px;background:#a0170c"></div>
<div style="left:524px;top:367px;width:647px;height:1px;background:#dde0e8"></div>
<span style="left:531.34px;top:376.98px;font-size:16.5px;font-weight:700;color:#111;letter-spacing:0.193px;">5/2/2021 08:24 pm - 5/2/2021 08:54 pm</span>
<span style="left:845.86px;top:378.40px;font-size:16px;font-weight:400;color:#fff;letter-spacing:-0.393px;">60.54 °C</span>
<span style="left:1057.36px;top:378.40px;font-size:16px;font-weight:400;color:#222;letter-spacing:-0.479px;">Phase 2</span>
<div style="left:840px;top:401px;width:210px;height:34px;background:#a0170c"></div>
<div style="left:524px;top:401px;width:647px;height:1px;background:#dde0e8"></div>
<span style="left:531.34px;top:410.98px;font-size:16.5px;font-weight:700;color:#111;letter-spacing:0.193px;">5/2/2021 08:54 pm - 5/2/2021 09:34 pm</span>
<span style="left:845.86px;top:412.40px;font-size:16px;font-weight:400;color:#fff;letter-spacing:-0.438px;">60 °C</span>
<span style="left:1057.36px;top:412.40px;font-size:16px;font-weight:400;color:#222;letter-spacing:-0.479px;">Phase 3</span>
<div style="left:840px;top:435px;width:210px;height:34px;background:#a0170c"></div>
<div style="left:524px;top:435px;width:647px;height:1px;background:#dde0e8"></div>
<span style="left:531.34px;top:444.98px;font-size:16.5px;font-weight:700;color:#111;letter-spacing:0.193px;">5/2/2021 09:34 pm - 5/2/2021 10:34 pm</span>
<span style="left:845.86px;top:446.40px;font-size:16px;font-weight:400;color:#fff;letter-spacing:-0.438px;">51 °C</span>
<span style="left:1057.36px;top:446.40px;font-size:16px;font-weight:400;color:#222;letter-spacing:-0.479px;">Phase 4</span>
<div style="left:840px;top:469px;width:210px;height:34px;background:#a0170c"></div>
<div style="left:524px;top:469px;width:647px;height:1px;background:#dde0e8"></div>
<span style="left:531.84px;top:478.98px;font-size:16.5px;font-weight:700;color:#111;letter-spacing:0.190px;">5/2/2021 10:34 pm - 5/3/2021 02:34 am</span>
<span style="left:845.86px;top:480.40px;font-size:16px;font-weight:400;color:#fff;letter-spacing:-0.394px;">49.918 °C</span>
<span style="left:1057.36px;top:480.40px;font-size:16px;font-weight:400;color:#222;letter-spacing:-0.479px;">Phase 5</span>
<div style="left:524px;top:503px;width:647px;height:1px;background:#dde0e8"></div>
<span style="left:531.84px;top:512.98px;font-size:16.5px;font-weight:700;color:#111;letter-spacing:0.215px;">5/3/2021 02:34 am - 5/3/2021 04:04 am</span>
<span style="left:845.86px;top:514.40px;font-size:16px;font-weight:400;color:#222;letter-spacing:-0.392px;">10.2 °C</span>
<span style="left:1057.36px;top:514.40px;font-size:16px;font-weight:400;color:#222;letter-spacing:-0.479px;">Phase 6</span>
<div style="left:524px;top:537px;width:647px;height:1px;background:#dde0e8"></div>
<span style="left:535.84px;top:546.98px;font-size:16.5px;font-weight:700;color:#111;letter-spacing:-0.029px;">5/3/2021 04:04 am - Ends out of range</span>
<span style="left:845.86px;top:548.40px;font-size:16px;font-weight:400;color:#222;letter-spacing:0.000px;">-</span>
<span style="left:1057.36px;top:548.40px;font-size:16px;font-weight:400;color:#222;letter-spacing:0.000px;">-</span>
<div style="left:524px;top:571px;width:647px;height:1px;background:#dde0e8"></div>
<span style="left:531.84px;top:580.98px;font-size:16.5px;font-weight:700;color:#111;letter-spacing:0.215px;">5/3/2021 04:04 am - 5/3/2021 05:36 am</span>
<span style="left:845.86px;top:582.40px;font-size:16px;font-weight:400;color:#222;letter-spacing:-0.393px;">10.18 °C</span>
<span style="left:1057.36px;top:582.40px;font-size:16px;font-weight:400;color:#222;letter-spacing:-0.479px;">Phase 1</span>
<div style="left:839px;top:160px;width:1px;height:445px;background:#dde0e8"></div>
<div style="left:1050px;top:160px;width:1px;height:445px;background:#dde0e8"></div>
<span style="left:852.34px;top:169.97px;font-size:16.5px;font-weight:700;color:#111;letter-spacing:-0.153px;">Max Temp per Phase</span>
<span style="left:1063.34px;top:169.97px;font-size:16.5px;font-weight:700;color:#111;letter-spacing:-0.326px;">Phase</span>
<svg style="left:818px;top:167px" width="6" height="19" viewBox="0 0 6 19"><circle cx="3" cy="3" r="2.6" fill="#c4c4c4"/><circle cx="3" cy="9.5" r="2.6" fill="#c4c4c4"/><circle cx="3" cy="16" r="2.6" fill="#c4c4c4"/></svg>
<svg style="left:1029px;top:167px" width="6" height="19" viewBox="0 0 6 19"><circle cx="3" cy="3" r="2.6" fill="#c4c4c4"/><circle cx="3" cy="9.5" r="2.6" fill="#c4c4c4"/><circle cx="3" cy="16" r="2.6" fill="#c4c4c4"/></svg>
<svg style="left:1150px;top:167px" width="6" height="19" viewBox="0 0 6 19"><circle cx="3" cy="3" r="2.6" fill="#c4c4c4"/><circle cx="3" cy="9.5" r="2.6" fill="#c4c4c4"/><circle cx="3" cy="16" r="2.6" fill="#c4c4c4"/></svg>
<svg style="left:1120px;top:168px" width="19" height="19" viewBox="0 0 19 19"><path d="M9.5 1 L12.5 4.5 H10.7 V8.3 H14.5 V6.5 L18 9.5 L14.5 12.5 V10.7 H10.7 V14.5 H12.5 L9.5 18 L6.5 14.5 H8.3 V10.7 H4.5 V12.5 L1 9.5 L4.5 6.5 V8.3 H8.3 V4.5 H6.5 Z" fill="#c8c8c8"/></svg>
<svg style="left:1199px;top:326px" width="28" height="40" viewBox="0 0 28 40"><path d="M1.5 1.5 V31 L8.5 24.5 L13 35.5 L18.5 33 L14 22.5 H23.5 Z" fill="#fff" stroke="#111" stroke-width="2.2" stroke-linejoin="miter"/><path d="M3 4 V28" stroke="#777" stroke-width="2"/></svg>
<span style="left:517.40px;top:712.25px;font-size:15px;font-weight:400;color:#555;letter-spacing:-0.148px;">5/2/2021 1:38 PM</span>
<span style="left:641.40px;top:712.25px;font-size:15px;font-weight:400;color:#555;letter-spacing:-0.900px;">PDT</span>
<div style="left:641px;top:726px;width:28px;height:1px;background:#555"></div>
<svg style="left:858px;top:710px" width="20" height="19" viewBox="0 0 20 19"><path d="M10 1 V18 L1 9.5Z M19 1 V18 L10 9.5Z" fill="#437a5d"/></svg>
<svg style="left:898px;top:710px" width="11" height="19" viewBox="0 0 11 19"><path d="M10 1 V18 L1 9.5Z" fill="#437a5d"/></svg>
<span style="left:928.40px;top:712.25px;font-size:15px;font-weight:400;color:#555;letter-spacing:0.034px;">15.7 hours</span>
<svg style="left:1020px;top:710px" width="11" height="19" viewBox="0 0 11 19"><path d="M1 1 V18 L10 9.5Z" fill="#437a5d"/></svg>
<svg style="left:1051px;top:710px" width="20" height="19" viewBox="0 0 20 19"><path d="M1 1 V18 L10 9.5Z M10 1 V18 L19 9.5Z" fill="#437a5d"/></svg>
<svg style="left:1089px;top:710px" width="14" height="19" viewBox="0 0 14 19"><path d="M1 1 V18 L9 9.5Z" fill="#437a5d"/><rect x="10" y="1" width="3" height="17" fill="#437a5d"/></svg>
<svg style="left:1125px;top:713px" width="14" height="14" viewBox="0 0 14 14"><g fill="none" stroke="#437a5d" stroke-width="2.2"><path d="M2 6 Q3 2 7 2 Q10 2 11.5 4.5"/><path d="M12 8 Q11 12 7 12 Q4 12 2.5 9.5"/></g><path d="M9 5.5 H13.5 V1Z M5 8.5 H0.5 V13Z" fill="#437a5d"/></svg>
<span style="left:1426.40px;top:712.25px;font-size:15px;font-weight:400;color:#555;letter-spacing:-0.093px;">5/3/2021 5:23 AM</span>
<span style="left:1550.40px;top:712.25px;font-size:15px;font-weight:400;color:#555;letter-spacing:-0.900px;">PDT</span>
<div style="left:1550px;top:726px;width:28px;height:1px;background:#555"></div>
<div style="left:497px;top:738px;width:653px;height:36px;background:#477d62"></div>
<svg style="left:510px;top:747px" width="22" height="17" viewBox="0 0 22 17"><path d="M1 0 V16 H22" fill="none" stroke="#fff" stroke-width="2"/><path d="M3 14 V6 L7 1.5 L12 6.5 L16 4.5 L18.5 14 Z" fill="#fff"/></svg>
<span style="left:535.32px;top:747.55px;font-size:17px;font-weight:400;color:#fff;letter-spacing:-0.101px;">Details</span>
<div style="left:1039px;top:741px;width:104px;height:30px;background:#fff;border-radius:4px"></div>
<svg style="left:1047px;top:746px" width="20" height="18" viewBox="0 0 20 18"><g fill="#1e1e1e"><circle cx="6.8" cy="8.8" r="4.2"/><rect x="5.70" y="2.90" width="2.2" height="5.9" transform="rotate(0.0 6.8 8.8)"/><rect x="5.70" y="2.90" width="2.2" height="5.9" transform="rotate(45.0 6.8 8.8)"/><rect x="5.70" y="2.90" width="2.2" height="5.9" transform="rotate(90.0 6.8 8.8)"/><rect x="5.70" y="2.90" width="2.2" height="5.9" transform="rotate(135.0 6.8 8.8)"/><rect x="5.70" y="2.90" width="2.2" height="5.9" transform="rotate(180.0 6.8 8.8)"/><rect x="5.70" y="2.90" width="2.2" height="5.9" transform="rotate(225.0 6.8 8.8)"/><rect x="5.70" y="2.90" width="2.2" height="5.9" transform="rotate(270.0 6.8 8.8)"/><rect x="5.70" y="2.90" width="2.2" height="5.9" transform="rotate(315.0 6.8 8.8)"/></g><circle cx="6.8" cy="8.8" r="1.9" fill="#fff"/><g fill="#1e1e1e"><circle cx="15.6" cy="3.9" r="2.3"/><rect x="14.85" y="0.40" width="1.5" height="3.5" transform="rotate(0.0 15.6 3.9)"/><rect x="14.85" y="0.40" width="1.5" height="3.5" transform="rotate(45.0 15.6 3.9)"/><rect x="14.85" y="0.40" width="1.5" height="3.5" transform="rotate(90.0 15.6 3.9)"/><rect x="14.85" y="0.40" width="1.5" height="3.5" transform="rotate(135.0 15.6 3.9)"/><rect x="14.85" y="0.40" width="1.5" height="3.5" transform="rotate(180.0 15.6 3.9)"/><rect x="14.85" y="0.40" width="1.5" height="3.5" transform="rotate(225.0 15.6 3.9)"/><rect x="14.85" y="0.40" width="1.5" height="3.5" transform="rotate(270.0 15.6 3.9)"/><rect x="14.85" y="0.40" width="1.5" height="3.5" transform="rotate(315.0 15.6 3.9)"/></g><circle cx="15.6" cy="3.9" r="1.2" fill="#fff"/><g fill="#1e1e1e"><circle cx="15.6" cy="13.7" r="2.3"/><rect x="14.85" y="10.20" width="1.5" height="3.5" transform="rotate(0.0 15.6 13.7)"/><rect x="14.85" y="10.20" width="1.5" height="3.5" transform="rotate(45.0 15.6 13.7)"/><rect x="14.85" y="10.20" width="1.5" height="3.5" transform="rotate(90.0 15.6 13.7)"/><rect x="14.85" y="10.20" width="1.5" height="3.5" transform="rotate(135.0 15.6 13.7)"/><rect x="14.85" y="10.20" width="1.5" height="3.5" transform="rotate(180.0 15.6 13.7)"/><rect x="14.85" y="10.20" width="1.5" height="3.5" transform="rotate(225.0 15.6 13.7)"/><rect x="14.85" y="10.20" width="1.5" height="3.5" transform="rotate(270.0 15.6 13.7)"/><rect x="14.85" y="10.20" width="1.5" height="3.5" transform="rotate(315.0 15.6 13.7)"/></g><circle cx="15.6" cy="13.7" r="1.2" fill="#fff"/></svg>
<span style="left:1069.44px;top:749.10px;font-size:14px;font-weight:400;color:#222;letter-spacing:-0.128px;">Customize</span>
<div style="left:497px;top:774px;width:653px;height:254px;background:#fdfdfc"></div>
<div style="left:497px;top:809px;width:653px;height:2px;background:#e3e5ea"></div>
<svg style="left:587px;top:789px" width="13" height="13" viewBox="0 0 13 13"><path d="M2 2 L11 11 M11 2 L2 11" stroke="#437a5d" stroke-width="3"/></svg>
<svg style="left:614px;top:787px" width="16" height="16" viewBox="0 0 16 16"><rect x="0" y="0" width="16" height="16" rx="2" fill="#1d1d1d"/><path d="M3.5 8 L6.8 11 L12.5 4.5" stroke="#fff" stroke-width="2.2" fill="none"/></svg>
<svg style="left:683px;top:788px" width="11" height="14" viewBox="0 0 11 14"><path d="M1 6 L5.5 1 L10 6Z M1 8 L5.5 13 L10 8Z" fill="#666"/></svg>
<span style="left:702.34px;top:786.98px;font-size:16.5px;font-weight:700;color:#222;letter-spacing:0.122px;">Name</span>
<svg style="left:758px;top:788px" width="11" height="14" viewBox="0 0 11 14"><path d="M1 6 L5.5 1 L10 6Z M1 8 L5.5 13 L10 8Z" fill="#666"/></svg>
<span style="left:884.34px;top:786.98px;font-size:16.5px;font-weight:700;color:#222;letter-spacing:-0.193px;">Color</span>
<svg style="left:937px;top:788px" width="11" height="14" viewBox="0 0 11 14"><path d="M1 6 L5.5 1 L10 6Z M1 8 L5.5 13 L10 8Z" fill="#666"/></svg>
<span style="left:955.34px;top:786.98px;font-size:16.5px;font-weight:700;color:#222;letter-spacing:-0.561px;">Assets</span>
<span style="left:1079.34px;top:786.98px;font-size:16.5px;font-weight:700;color:#437a5d;letter-spacing:-0.065px;">Lane</span>
<svg style="left:1127px;top:787px" width="12" height="7" viewBox="0 0 12 7"><path d="M0.5 6.5 L6 0.5 L11.5 6.5Z" fill="#437a5d"/></svg>
<div style="left:497px;top:811px;width:653px;height:29px;background:#f6f7f9"></div>
<div style="left:497px;top:840px;width:653px;height:1px;background:#e3e5ea"></div>
<svg style="left:502px;top:816px" width="19" height="16" viewBox="0 0 19 16"><rect x="1" y="3" width="13" height="12" rx="1.5" fill="none" stroke="#437a5d" stroke-width="1.3"/><path d="M7 10 L15.5 1.5 L18 4 L9.5 12.5 L6.5 13Z" fill="#fff" stroke="#437a5d" stroke-width="1.2"/></svg>
<svg style="left:531px;top:816px" width="18" height="17" viewBox="0 0 18 17"><path d="M17.5 0.5 Q10 0.5 6 6 L3 6 L0.5 9 L4 9.5 L7.5 13 L8 16.5 L11 14 L11 11 Q17 7 17.5 0.5Z" fill="#437a5d"/><path d="M4 12 L1 16.5 L5.5 13.5" fill="#437a5d"/></svg>
<svg style="left:559px;top:816px" width="16" height="16" viewBox="0 0 16 16"><circle cx="8" cy="8" r="7.8" fill="#437a5d"/><circle cx="8" cy="4" r="1.5" fill="#fff"/><path d="M5.5 6.5 H9.2 V11.3 H10.5 V12.7 H5.5 V11.3 H6.8 V8 H5.5Z" fill="#fff"/></svg>
<svg style="left:587px;top:818px" width="13" height="13" viewBox="0 0 13 13"><path d="M2 2 L11 11 M11 2 L2 11" stroke="#437a5d" stroke-width="3"/></svg>
<svg style="left:614px;top:817px" width="16" height="16" viewBox="0 0 16 16"><rect x="1.2" y="1.2" width="13.6" height="13.6" rx="2.5" fill="#fff" stroke="#2a2a2a" stroke-width="1.35"/></svg>
<svg style="left:646px;top:815px" width="20" height="19" viewBox="0 0 20 19"><path d="M1 11 L4.5 1.5 L8 15 L11.5 6 L14.5 16 L17.5 10 L19 14" fill="none" stroke="#3b4ea8" stroke-width="1.8" stroke-linejoin="round"/></svg>
<span style="left:702.34px;top:818.98px;font-size:16.5px;font-weight:700;color:#111;letter-spacing:-0.326px;">Phase</span>
<div style="left:905px;top:817px;width:21px;height:20px;background:#4a55a1;border:1px solid #333;box-sizing:border-box"></div>
<span style="left:955.34px;top:818.98px;font-size:16.5px;font-weight:400;color:#437a5d;letter-spacing:-0.200px;">Site 1 Reactor 1</span>
<div style="left:956px;top:834px;width:114px;height:1px;background:#437a5d"></div>
<span style="left:1129.47px;top:818.98px;font-size:16.5px;font-weight:400;color:#222;letter-spacing:0.000px;">1</span>
<div style="left:497px;top:841px;width:653px;height:29px;background:#fdfdfc"></div>
<div style="left:497px;top:870px;width:653px;height:1px;background:#e3e5ea"></div>
<svg style="left:502px;top:846px" width="19" height="16" viewBox="0 0 19 16"><rect x="1" y="3" width="13" height="12" rx="1.5" fill="none" stroke="#437a5d" stroke-width="1.3"/><path d="M7 10 L15.5 1.5 L18 4 L9.5 12.5 L6.5 13Z" fill="#fff" stroke="#437a5d" stroke-width="1.2"/></svg>
<svg style="left:531px;top:846px" width="18" height="17" viewBox="0 0 18 17"><path d="M17.5 0.5 Q10 0.5 6 6 L3 6 L0.5 9 L4 9.5 L7.5 13 L8 16.5 L11 14 L11 11 Q17 7 17.5 0.5Z" fill="#437a5d"/><path d="M4 12 L1 16.5 L5.5 13.5" fill="#437a5d"/></svg>
<svg style="left:559px;top:846px" width="16" height="16" viewBox="0 0 16 16"><circle cx="8" cy="8" r="7.8" fill="#437a5d"/><circle cx="8" cy="4" r="1.5" fill="#fff"/><path d="M5.5 6.5 H9.2 V11.3 H10.5 V12.7 H5.5 V11.3 H6.8 V8 H5.5Z" fill="#fff"/></svg>
<svg style="left:587px;top:848px" width="13" height="13" viewBox="0 0 13 13"><path d="M2 2 L11 11 M11 2 L2 11" stroke="#437a5d" stroke-width="3"/></svg>
<svg style="left:614px;top:847px" width="16" height="16" viewBox="0 0 16 16"><rect x="1.2" y="1.2" width="13.6" height="13.6" rx="2.5" fill="#fff" stroke="#2a2a2a" stroke-width="1.35"/></svg>
<svg style="left:646px;top:845px" width="20" height="19" viewBox="0 0 20 19"><path d="M1 11 L4.5 1.5 L8 15 L11.5 6 L14.5 16 L17.5 10 L19 14" fill="none" stroke="#4c8b3c" stroke-width="1.8" stroke-linejoin="round"/></svg>
<span style="left:676.36px;top:850.40px;font-size:16px;font-weight:400;color:#333;letter-spacing:-1.673px;">°C</span>
<span style="left:702.34px;top:848.98px;font-size:16.5px;font-weight:700;color:#111;letter-spacing:0.086px;">Reactor Temperature</span>
<div style="left:905px;top:847px;width:21px;height:20px;background:#4b8a4d;border:1px solid #333;box-sizing:border-box"></div>
<span style="left:955.34px;top:848.98px;font-size:16.5px;font-weight:400;color:#437a5d;letter-spacing:-0.200px;">Site 1 Reactor 1</span>
<div style="left:956px;top:864px;width:114px;height:1px;background:#437a5d"></div>
<span style="left:1129.47px;top:848.98px;font-size:16.5px;font-weight:400;color:#222;letter-spacing:0.000px;">2</span>
<div style="left:497px;top:871px;width:653px;height:29px;background:#fbfaee"></div>
<div style="left:497px;top:900px;width:653px;height:1px;background:#e3e5ea"></div>
<svg style="left:502px;top:876px" width="19" height="16" viewBox="0 0 19 16"><rect x="1" y="3" width="13" height="12" rx="1.5" fill="none" stroke="#437a5d" stroke-width="1.3"/><path d="M7 10 L15.5 1.5 L18 4 L9.5 12.5 L6.5 13Z" fill="#fff" stroke="#437a5d" stroke-width="1.2"/></svg>
<svg style="left:531px;top:876px" width="18" height="17" viewBox="0 0 18 17"><path d="M17.5 0.5 Q10 0.5 6 6 L3 6 L0.5 9 L4 9.5 L7.5 13 L8 16.5 L11 14 L11 11 Q17 7 17.5 0.5Z" fill="#437a5d"/><path d="M4 12 L1 16.5 L5.5 13.5" fill="#437a5d"/></svg>
<svg style="left:559px;top:876px" width="16" height="16" viewBox="0 0 16 16"><circle cx="8" cy="8" r="7.8" fill="#437a5d"/><circle cx="8" cy="4" r="1.5" fill="#fff"/><path d="M5.5 6.5 H9.2 V11.3 H10.5 V12.7 H5.5 V11.3 H6.8 V8 H5.5Z" fill="#fff"/></svg>
<svg style="left:587px;top:878px" width="13" height="13" viewBox="0 0 13 13"><path d="M2 2 L11 11 M11 2 L2 11" stroke="#437a5d" stroke-width="3"/></svg>
<svg style="left:614px;top:877px" width="16" height="16" viewBox="0 0 16 16"><rect x="0" y="0" width="16" height="16" rx="2" fill="#1d1d1d"/><path d="M3.5 8 L6.8 11 L12.5 4.5" stroke="#fff" stroke-width="2.2" fill="none"/></svg>
<svg style="left:647px;top:874px" width="19" height="19" viewBox="0 0 19 19"><rect x="0.5" y="0.5" width="18" height="18" fill="#fff" stroke="#5870c0" stroke-width="1"/><rect x="0.5" y="0.5" width="18" height="9" fill="#5870c0"/><path d="M6 5 L8.5 7 L13 2.5" stroke="#fff" stroke-width="1.3" fill="none"/><path d="M7 12 L11.5 16 M11.5 12 L7 16" stroke="#5870c0" stroke-width="1.2"/></svg>
<span style="left:676.36px;top:880.40px;font-size:16px;font-weight:400;color:#333;letter-spacing:-1.673px;">°C</span>
<span style="left:702.34px;top:878.98px;font-size:16.5px;font-weight:700;color:#111;letter-spacing:-0.153px;">Max Temp per Phase</span>
<div style="left:905px;top:877px;width:21px;height:20px;background:#5b77c6;border:1px solid #333;box-sizing:border-box"></div>
<span style="left:955.34px;top:878.98px;font-size:16.5px;font-weight:400;color:#437a5d;letter-spacing:-0.200px;">Site 1 Reactor 1</span>
<div style="left:956px;top:894px;width:114px;height:1px;background:#437a5d"></div>
<span style="left:1129.47px;top:878.98px;font-size:16.5px;font-weight:400;color:#222;letter-spacing:0.000px;">2</span>
<div style="left:497px;top:901px;width:653px;height:29px;background:#fbfaee"></div>
<div style="left:497px;top:930px;width:653px;height:1px;background:#e3e5ea"></div>
<svg style="left:502px;top:906px" width="19" height="16" viewBox="0 0 19 16"><rect x="1" y="3" width="13" height="12" rx="1.5" fill="none" stroke="#437a5d" stroke-width="1.3"/><path d="M7 10 L15.5 1.5 L18 4 L9.5 12.5 L6.5 13Z" fill="#fff" stroke="#437a5d" stroke-width="1.2"/></svg>
<svg style="left:531px;top:906px" width="18" height="17" viewBox="0 0 18 17"><path d="M17.5 0.5 Q10 0.5 6 6 L3 6 L0.5 9 L4 9.5 L7.5 13 L8 16.5 L11 14 L11 11 Q17 7 17.5 0.5Z" fill="#437a5d"/><path d="M4 12 L1 16.5 L5.5 13.5" fill="#437a5d"/></svg>
<svg style="left:559px;top:906px" width="16" height="16" viewBox="0 0 16 16"><circle cx="8" cy="8" r="7.8" fill="#437a5d"/><circle cx="8" cy="4" r="1.5" fill="#fff"/><path d="M5.5 6.5 H9.2 V11.3 H10.5 V12.7 H5.5 V11.3 H6.8 V8 H5.5Z" fill="#fff"/></svg>
<svg style="left:587px;top:908px" width="13" height="13" viewBox="0 0 13 13"><path d="M2 2 L11 11 M11 2 L2 11" stroke="#437a5d" stroke-width="3"/></svg>
<svg style="left:614px;top:907px" width="16" height="16" viewBox="0 0 16 16"><rect x="0" y="0" width="16" height="16" rx="2" fill="#1d1d1d"/><path d="M3.5 8 L6.8 11 L12.5 4.5" stroke="#fff" stroke-width="2.2" fill="none"/></svg>
<svg style="left:648px;top:904px" width="17" height="20" viewBox="0 0 17 20"><rect x="0.5" y="0.5" width="7" height="19" rx="1.2" fill="#8a6344"/><rect x="8.6" y="0.5" width="7.6" height="19" rx="1.2" fill="#8a6344"/><path d="M2 4 L4 17 L6.3 3.5 L8.2 15 L10.2 3.5 L12.4 17 L14.6 4" stroke="#fff" stroke-width="1.1" fill="none"/></svg>
<span style="left:702.34px;top:908.98px;font-size:16.5px;font-weight:700;color:#111;letter-spacing:0.089px;">phases</span>
<div style="left:905px;top:907px;width:21px;height:20px;background:#8a6344;border:1px solid #333;box-sizing:border-box"></div>
<span style="left:955.34px;top:908.98px;font-size:16.5px;font-weight:400;color:#437a5d;letter-spacing:-0.200px;">Site 1 Reactor 1</span>
<div style="left:956px;top:924px;width:114px;height:1px;background:#437a5d"></div>
<div style="left:1153px;top:877px;width:1.5px;height:12px;background:#777"></div>
<div style="left:1156px;top:877px;width:1.5px;height:12px;background:#777"></div>
<div style="left:497px;top:1017px;width:653px;height:11px;background:#e8e8e8;border-radius:5px"></div>
<div style="left:498px;top:1017px;width:556px;height:11px;background:#dadada;border-radius:5px"></div>
<div style="left:1150px;top:738px;width:1px;height:290px;background:#e1e1e1"></div>
<div style="left:1151px;top:738px;width:10px;height:290px;background:#f4f4f4"></div>
<div style="left:1160px;top:774px;width:1px;height:254px;background:#d8d8d8"></div>
<div style="left:1161px;top:738px;width:438px;height:36px;background:#477d62"></div>
<div style="left:1599px;top:738px;width:1px;height:290px;background:#e8e8e8"></div>
<svg style="left:1176px;top:744px" width="16" height="20" viewBox="0 0 16 20"><path d="M4.6 1.2 H2 V18.4 H4.6 M11 1.2 H13.6 V18.4 H11" fill="none" stroke="#fff" stroke-width="2.2"/><path d="M4.8 4 L6.3 15.5 L7.8 7 L9.3 15.5 L10.8 4" fill="none" stroke="#fff" stroke-width="1.1"/></svg>
<span style="left:1196.32px;top:747.55px;font-size:17px;font-weight:400;color:#fff;letter-spacing:-0.359px;">Capsules</span>
<div style="left:1532px;top:741px;width:60px;height:30px;background:#fff;border-radius:4px"></div>
<div style="left:1563px;top:741px;width:1px;height:30px;background:#ddd"></div>
<svg style="left:1539px;top:747px" width="19" height="19" viewBox="0 0 19 19"><circle cx="7.5" cy="7.5" r="6" fill="none" stroke="#111" stroke-width="2.3"/><path d="M7.5 4.5 V10.5 M4.5 7.5 H10.5" stroke="#111" stroke-width="1.4"/><path d="M12 12 L16.5 16.5" stroke="#111" stroke-width="2.5" stroke-linecap="round"/></svg>
<svg style="left:1570px;top:747px" width="14" height="14" viewBox="0 0 14 14"><rect x="1" y="1" width="12" height="12" rx="2" fill="none" stroke="#333" stroke-width="1.2"/><path d="M3.5 7 H10.5" stroke="#333" stroke-width="1.2"/></svg>
<div style="left:1161px;top:774px;width:426px;height:254px;background:#fdfdfc"></div>
<div style="left:1161px;top:814px;width:426px;height:1.5px;background:#e3e5ea"></div>
<svg style="left:1169px;top:791px" width="16" height="16" viewBox="0 0 16 16"><rect x="1.2" y="1.2" width="13.6" height="13.6" rx="2.5" fill="#fff" stroke="#2a2a2a" stroke-width="1.35"/></svg>
<span style="left:1230.34px;top:791.98px;font-size:16.5px;font-weight:700;color:#437a5d;letter-spacing:0.432px;">Start</span>
<svg style="left:1279px;top:792px" width="12" height="6" viewBox="0 0 12 6"><path d="M0.5 5.5 L6 0.5 L11.5 5.5Z" fill="#437a5d"/></svg>
<span style="left:1408.34px;top:791.98px;font-size:16.5px;font-weight:700;color:#222;letter-spacing:0.299px;">Value</span>
<svg style="left:1462px;top:792px" width="11" height="14" viewBox="0 0 11 14"><path d="M1 6 L5.5 1 L10 6Z M1 8 L5.5 13 L10 8Z" fill="#666"/></svg>
<svg style="left:1490px;top:783px" width="23" height="20" viewBox="0 0 23 20"><rect x="0.5" y="0.5" width="18" height="15" fill="#fff" stroke="#333"/><path d="M0.5 5.5 H11 M0.5 10.5 H11 M11 0.5 V15.5" stroke="#333"/><rect x="11.5" y="1" width="6.5" height="14" fill="#c8c8c8"/><circle cx="18" cy="15" r="4.3" fill="#333" stroke="#fff" stroke-width="1"/><path d="M18 12.5 V17.5 M15.5 15 H20.5" stroke="#fff" stroke-width="1.4"/></svg>
<div style="left:1522px;top:778px;width:1px;height:32px;background:#ddd"></div>
<svg style="left:1547px;top:783px" width="23" height="20" viewBox="0 0 23 20"><rect x="0.5" y="0.5" width="18" height="15" fill="#fff" stroke="#4658a8"/><path d="M0.5 5.5 H11 M0.5 10.5 H11 M11 0.5 V15.5" stroke="#4658a8"/><rect x="11.5" y="1" width="6.5" height="14" fill="#c9cde0"/><circle cx="18" cy="15" r="4.3" fill="#4658a8" stroke="#fff" stroke-width="1"/><path d="M18 12.5 V17.5 M15.5 15 H20.5" stroke="#fff" stroke-width="1.4"/></svg>
<div style="left:1161px;top:815px;width:426px;height:30px;background:#f5f5f6"></div>
<svg style="left:1169px;top:822px" width="16" height="16" viewBox="0 0 16 16"><circle cx="8" cy="8" r="6.5" fill="none" stroke="#bbb" stroke-width="2"/><path d="M3.5 12.5 L12.5 3.5" stroke="#bbb" stroke-width="2"/></svg>
<svg style="left:1203px;top:818px" width="15" height="20" viewBox="0 0 15 20"><path d="M4.6 1.6 H2 V18.6 H4.6 M10.4 1.6 H13 V18.6 H10.4" fill="none" stroke="#a5713c" stroke-width="2"/><path d="M4.6 4.5 L6.1 16 L7.5 7.5 L8.9 16 L10.4 4.5" fill="none" stroke="#a5713c" stroke-width="1"/></svg>
<span style="left:1230.32px;top:822.55px;font-size:17px;font-weight:400;color:#222;letter-spacing:-0.190px;">Starts off-screen</span>
<span style="left:1409.32px;top:822.55px;font-size:17px;font-weight:400;color:#222;letter-spacing:-0.838px;">Phase 3</span>
<div style="left:1161px;top:845px;width:426px;height:30px;background:#fdfdfc"></div>
<svg style="left:1169px;top:852px" width="16" height="16" viewBox="0 0 16 16"><rect x="1.2" y="1.2" width="13.6" height="13.6" rx="2.5" fill="#fff" stroke="#2a2a2a" stroke-width="1.35"/></svg>
<svg style="left:1203px;top:848px" width="15" height="20" viewBox="0 0 15 20"><path d="M4.6 1.6 H2 V18.6 H4.6 M10.4 1.6 H13 V18.6 H10.4" fill="none" stroke="#a5713c" stroke-width="2"/><path d="M4.6 4.5 L6.1 16 L7.5 7.5 L8.9 16 L10.4 4.5" fill="none" stroke="#a5713c" stroke-width="1"/></svg>
<span style="left:1230.32px;top:852.55px;font-size:17px;font-weight:400;color:#222;letter-spacing:-0.791px;">May 2, 2021 4:32 PM</span>
<span style="left:1409.32px;top:852.55px;font-size:17px;font-weight:400;color:#222;letter-spacing:-0.838px;">Phase 4</span>
<div style="left:1161px;top:875px;width:426px;height:30px;background:#f5f5f6"></div>
<svg style="left:1169px;top:882px" width="16" height="16" viewBox="0 0 16 16"><rect x="1.2" y="1.2" width="13.6" height="13.6" rx="2.5" fill="#fff" stroke="#2a2a2a" stroke-width="1.35"/></svg>
<svg style="left:1203px;top:878px" width="15" height="20" viewBox="0 0 15 20"><path d="M4.6 1.6 H2 V18.6 H4.6 M10.4 1.6 H13 V18.6 H10.4" fill="none" stroke="#a5713c" stroke-width="2"/><path d="M4.6 4.5 L6.1 16 L7.5 7.5 L8.9 16 L10.4 4.5" fill="none" stroke="#a5713c" stroke-width="1"/></svg>
<span style="left:1230.32px;top:882.55px;font-size:17px;font-weight:400;color:#222;letter-spacing:-0.791px;">May 2, 2021 5:18 PM</span>
<span style="left:1409.32px;top:882.55px;font-size:17px;font-weight:400;color:#222;letter-spacing:-0.838px;">Phase 5</span>
<div style="left:1161px;top:905px;width:426px;height:30px;background:#fdfdfc"></div>
<svg style="left:1169px;top:912px" width="16" height="16" viewBox="0 0 16 16"><rect x="1.2" y="1.2" width="13.6" height="13.6" rx="2.5" fill="#fff" stroke="#2a2a2a" stroke-width="1.35"/></svg>
<svg style="left:1203px;top:908px" width="15" height="20" viewBox="0 0 15 20"><path d="M4.6 1.6 H2 V18.6 H4.6 M10.4 1.6 H13 V18.6 H10.4" fill="none" stroke="#a5713c" stroke-width="2"/><path d="M4.6 4.5 L6.1 16 L7.5 7.5 L8.9 16 L10.4 4.5" fill="none" stroke="#a5713c" stroke-width="1"/></svg>
<span style="left:1230.32px;top:912.55px;font-size:17px;font-weight:400;color:#222;letter-spacing:-0.791px;">May 2, 2021 6:54 PM</span>
<span style="left:1409.32px;top:912.55px;font-size:17px;font-weight:400;color:#222;letter-spacing:-0.838px;">Phase 1</span>
<div style="left:1161px;top:935px;width:426px;height:30px;background:#f5f5f6"></div>
<svg style="left:1169px;top:942px" width="16" height="16" viewBox="0 0 16 16"><rect x="1.2" y="1.2" width="13.6" height="13.6" rx="2.5" fill="#fff" stroke="#2a2a2a" stroke-width="1.35"/></svg>
<svg style="left:1203px;top:938px" width="15" height="20" viewBox="0 0 15 20"><path d="M4.6 1.6 H2 V18.6 H4.6 M10.4 1.6 H13 V18.6 H10.4" fill="none" stroke="#a5713c" stroke-width="2"/><path d="M4.6 4.5 L6.1 16 L7.5 7.5 L8.9 16 L10.4 4.5" fill="none" stroke="#a5713c" stroke-width="1"/></svg>
<span style="left:1230.32px;top:942.55px;font-size:17px;font-weight:400;color:#222;letter-spacing:-0.791px;">May 2, 2021 8:24 PM</span>
<span style="left:1409.32px;top:942.55px;font-size:17px;font-weight:400;color:#222;letter-spacing:-0.838px;">Phase 2</span>
<div style="left:1161px;top:965px;width:426px;height:30px;background:#fdfdfc"></div>
<svg style="left:1169px;top:972px" width="16" height="16" viewBox="0 0 16 16"><rect x="1.2" y="1.2" width="13.6" height="13.6" rx="2.5" fill="#fff" stroke="#2a2a2a" stroke-width="1.35"/></svg>
<svg style="left:1203px;top:968px" width="15" height="20" viewBox="0 0 15 20"><path d="M4.6 1.6 H2 V18.6 H4.6 M10.4 1.6 H13 V18.6 H10.4" fill="none" stroke="#a5713c" stroke-width="2"/><path d="M4.6 4.5 L6.1 16 L7.5 7.5 L8.9 16 L10.4 4.5" fill="none" stroke="#a5713c" stroke-width="1"/></svg>
<span style="left:1230.32px;top:972.55px;font-size:17px;font-weight:400;color:#222;letter-spacing:-0.791px;">May 2, 2021 8:54 PM</span>
<span style="left:1409.32px;top:972.55px;font-size:17px;font-weight:400;color:#222;letter-spacing:-0.838px;">Phase 3</span>
<div style="left:1161px;top:995px;width:426px;height:30px;background:#f5f5f6"></div>
<svg style="left:1169px;top:1002px" width="16" height="16" viewBox="0 0 16 16"><rect x="1.2" y="1.2" width="13.6" height="13.6" rx="2.5" fill="#fff" stroke="#2a2a2a" stroke-width="1.35"/></svg>
<svg style="left:1203px;top:998px" width="15" height="20" viewBox="0 0 15 20"><path d="M4.6 1.6 H2 V18.6 H4.6 M10.4 1.6 H13 V18.6 H10.4" fill="none" stroke="#a5713c" stroke-width="2"/><path d="M4.6 4.5 L6.1 16 L7.5 7.5 L8.9 16 L10.4 4.5" fill="none" stroke="#a5713c" stroke-width="1"/></svg>
<span style="left:1230.32px;top:1002.55px;font-size:17px;font-weight:400;color:#222;letter-spacing:-0.791px;">May 2, 2021 9:34 PM</span>
<span style="left:1409.32px;top:1002.55px;font-size:17px;font-weight:400;color:#222;letter-spacing:-0.838px;">Phase 4</span>
<div style="left:1161px;top:845px;width:426px;height:1px;background:#e2e2e8"></div>
<div style="left:1161px;top:875px;width:426px;height:1px;background:#e2e2e8"></div>
<div style="left:1161px;top:905px;width:426px;height:1px;background:#e2e2e8"></div>
<div style="left:1161px;top:935px;width:426px;height:1px;background:#e2e2e8"></div>
<div style="left:1161px;top:965px;width:426px;height:1px;background:#e2e2e8"></div>
<div style="left:1161px;top:995px;width:426px;height:1px;background:#e2e2e8"></div>
<div style="left:1161px;top:1025px;width:426px;height:1px;background:#e2e2e8"></div>
<div style="left:1161px;top:1017px;width:426px;height:11px;background:#fdfdfc"></div>
<div style="left:1587px;top:774px;width:12px;height:254px;background:#fdfdfc"></div>
<div style="left:1587px;top:775px;width:11px;height:171px;background:#dadada;border-radius:4px 4px 5px 5px"></div>
<div style="left:1587px;top:946px;width:11px;height:71px;background:#ececec;border-radius:0 0 5px 5px"></div>
<div style="left:1161px;top:1017px;width:426px;height:11px;background:#e8e8e8;border-radius:5px"></div>
<div style="left:1161px;top:1017px;width:386px;height:11px;background:#dadada;border-radius:5px"></div>
<div style="left:0px;top:1027px;width:14px;height:1px;background:#8a8a8a"></div>
<div style="left:482px;top:1027px;width:15px;height:1px;background:#8a8a8a"></div>
<div style="left:1599px;top:0px;width:1px;height:1028px;background:#000"></div>
</body></html>
